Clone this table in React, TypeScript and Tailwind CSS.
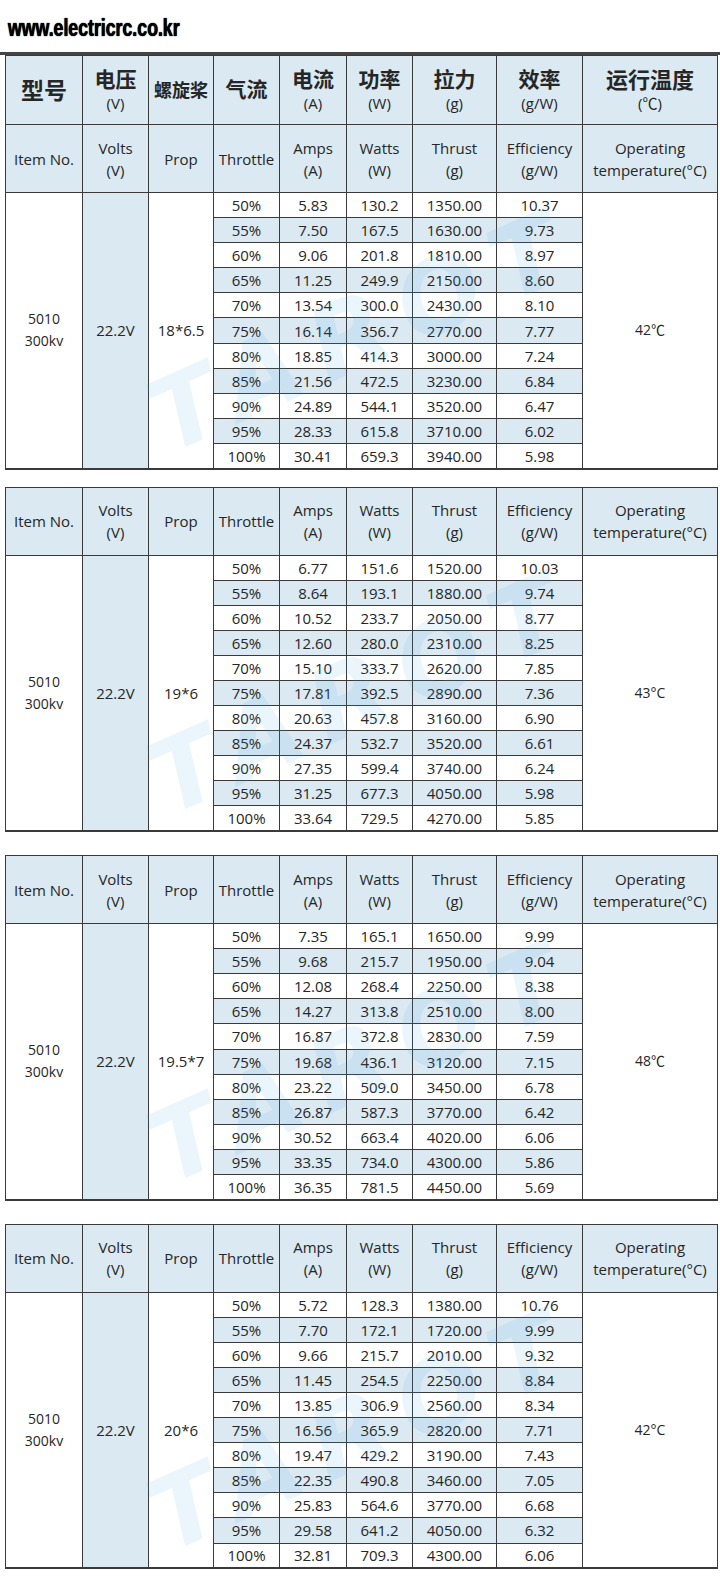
import React from 'react';

type Row = [string, string, string, string];

interface Section {
  prop: string;
  temp: string;
  rows: Row[];
}

const throttles = ['50%', '55%', '60%', '65%', '70%', '75%', '80%', '85%', '90%', '95%', '100%'];

const sections: Section[] = [
  {
    prop: '18*6.5',
    temp: '42℃',
    rows: [
      ['5.83', '130.2', '1350.00', '10.37'],
      ['7.50', '167.5', '1630.00', '9.73'],
      ['9.06', '201.8', '1810.00', '8.97'],
      ['11.25', '249.9', '2150.00', '8.60'],
      ['13.54', '300.0', '2430.00', '8.10'],
      ['16.14', '356.7', '2770.00', '7.77'],
      ['18.85', '414.3', '3000.00', '7.24'],
      ['21.56', '472.5', '3230.00', '6.84'],
      ['24.89', '544.1', '3520.00', '6.47'],
      ['28.33', '615.8', '3710.00', '6.02'],
      ['30.41', '659.3', '3940.00', '5.98'],
    ],
  },
  {
    prop: '19*6',
    temp: '43°C',
    rows: [
      ['6.77', '151.6', '1520.00', '10.03'],
      ['8.64', '193.1', '1880.00', '9.74'],
      ['10.52', '233.7', '2050.00', '8.77'],
      ['12.60', '280.0', '2310.00', '8.25'],
      ['15.10', '333.7', '2620.00', '7.85'],
      ['17.81', '392.5', '2890.00', '7.36'],
      ['20.63', '457.8', '3160.00', '6.90'],
      ['24.37', '532.7', '3520.00', '6.61'],
      ['27.35', '599.4', '3740.00', '6.24'],
      ['31.25', '677.3', '4050.00', '5.98'],
      ['33.64', '729.5', '4270.00', '5.85'],
    ],
  },
  {
    prop: '19.5*7',
    temp: '48℃',
    rows: [
      ['7.35', '165.1', '1650.00', '9.99'],
      ['9.68', '215.7', '1950.00', '9.04'],
      ['12.08', '268.4', '2250.00', '8.38'],
      ['14.27', '313.8', '2510.00', '8.00'],
      ['16.87', '372.8', '2830.00', '7.59'],
      ['19.68', '436.1', '3120.00', '7.15'],
      ['23.22', '509.0', '3450.00', '6.78'],
      ['26.87', '587.3', '3770.00', '6.42'],
      ['30.52', '663.4', '4020.00', '6.06'],
      ['33.35', '734.0', '4300.00', '5.86'],
      ['36.35', '781.5', '4450.00', '5.69'],
    ],
  },
  {
    prop: '20*6',
    temp: '42°C',
    rows: [
      ['5.72', '128.3', '1380.00', '10.76'],
      ['7.70', '172.1', '1720.00', '9.99'],
      ['9.66', '215.7', '2010.00', '9.32'],
      ['11.45', '254.5', '2250.00', '8.84'],
      ['13.85', '306.9', '2560.00', '8.34'],
      ['16.56', '365.9', '2820.00', '7.71'],
      ['19.47', '429.2', '3190.00', '7.43'],
      ['22.35', '490.8', '3460.00', '7.05'],
      ['25.83', '564.6', '3770.00', '6.68'],
      ['29.58', '641.2', '4050.00', '6.32'],
      ['32.81', '709.3', '4300.00', '6.06'],
    ],
  },
];

const colWidths = [77, 66, 65, 66, 67, 66, 84, 86, 135];

const cell = 'border border-[#3a3a3a] text-center align-middle p-0';
const blue = 'bg-[#dae9f2]';

const Cols = () => (
  <colgroup>
    {colWidths.map((w, i) => (
      <col key={i} style={{ width: w }} />
    ))}
  </colgroup>
);

const ChineseHeader = () => (
  <tr className={`h-[69px] ${blue}`}>
    <td className={`${cell} text-[23px] font-bold`}>型号</td>
    <td className={cell}>
      <div className="text-[21px] font-bold leading-[26px]">电压</div>
      <div className="text-[15px] leading-[22px]">(V)</div>
    </td>
    <td className={`${cell} text-[18px] font-bold`}>螺旋桨</td>
    <td className={`${cell} text-[21px] font-bold`}>气流</td>
    <td className={cell}>
      <div className="text-[21px] font-bold leading-[26px]">电流</div>
      <div className="text-[15px] leading-[22px]">(A)</div>
    </td>
    <td className={cell}>
      <div className="text-[21px] font-bold leading-[26px]">功率</div>
      <div className="text-[15px] leading-[22px]">(W)</div>
    </td>
    <td className={cell}>
      <div className="text-[21px] font-bold leading-[26px]">拉力</div>
      <div className="text-[15px] leading-[22px]">(g)</div>
    </td>
    <td className={cell}>
      <div className="text-[21px] font-bold leading-[26px]">效率</div>
      <div className="text-[15px] leading-[22px]">(g/W)</div>
    </td>
    <td className={cell}>
      <div className="text-[22px] font-bold leading-[26px]">运行温度</div>
      <div className="text-[15px] leading-[22px]">(℃)</div>
    </td>
  </tr>
);

const EnglishHeader = () => (
  <tr className={`h-[68px] ${blue} text-[15px] leading-[22px]`}>
    <td className={cell}>Item No.</td>
    <td className={cell}>Volts<br />(V)</td>
    <td className={cell}>Prop</td>
    <td className={cell}>Throttle</td>
    <td className={cell}>Amps<br />(A)</td>
    <td className={cell}>Watts<br />(W)</td>
    <td className={cell}>Thrust<br />(g)</td>
    <td className={cell}>Efficiency<br />(g/W)</td>
    <td className={cell}>Operating<br />temperature(°C)</td>
  </tr>
);

const SpecTable = ({ section, first }: { section: Section; first: boolean }) => (
  <div className="relative">
    {first && <div className="h-[3px] w-full bg-[#444]" />}
    <table className="ml-[5px] w-[712px] table-fixed border-collapse border-b-2 border-[#3a3a3a]">
      <Cols />
      <tbody>
        {first && <ChineseHeader />}
        <EnglishHeader />
        {section.rows.map((r, i) => {
          const shade = i % 2 === 1 ? blue : 'bg-white';
          return (
            <tr key={i} className="h-[25.1px] text-[15px] leading-[20px]">
              {i === 0 && (
                <>
                  <td rowSpan={11} className={`${cell} bg-white text-[14px] leading-[22px]`}>
                    5010<br />300kv
                  </td>
                  <td rowSpan={11} className={`${cell} ${blue}`}>22.2V</td>
                  <td rowSpan={11} className={`${cell} bg-white`}>{section.prop}</td>
                </>
              )}
              <td className={`${cell} ${shade}`}>{throttles[i]}</td>
              {r.map((v, j) => (
                <td key={j} className={`${cell} ${shade}`}>{v}</td>
              ))}
              {i === 0 && (
                <td rowSpan={11} className={`${cell} bg-white text-[14px]`}>{section.temp}</td>
              )}
            </tr>
          );
        })}
      </tbody>
    </table>
    {/* faint brand watermark over the data rows */}
    <div className="pointer-events-none absolute inset-x-0 bottom-0 flex h-[276px] items-center justify-center">
      <span className="-rotate-[24deg] pl-[10px] text-[100px] leading-[100px] font-black italic tracking-[18px] text-[rgba(60,160,225,0.11)] font-['DejaVu_Sans',sans-serif]">
        TAROT
      </span>
    </div>
  </div>
);

export default function App() {
  return (
    <div className="w-[720px] h-[1578px] bg-white text-[#262626] font-['Open_Sans','Noto_Sans_CJK_SC',sans-serif]">
      <div className="h-[52px] pl-[8px] pt-[15px]">
        <div className="origin-left scale-x-[0.77] whitespace-nowrap text-[23px] font-bold leading-[26px] text-black font-['Liberation_Sans',sans-serif] [text-shadow:0_0_1px_#000,0_0_1px_#000]">
          www.electricrc.co.kr
        </div>
      </div>
      <SpecTable section={sections[0]} first />
      <div className="h-[17px]" />
      <SpecTable section={sections[1]} first={false} />
      <div className="h-[23px]" />
      <SpecTable section={sections[2]} first={false} />
      <div className="h-[23px]" />
      <SpecTable section={sections[3]} first={false} />
    </div>
  );
}
